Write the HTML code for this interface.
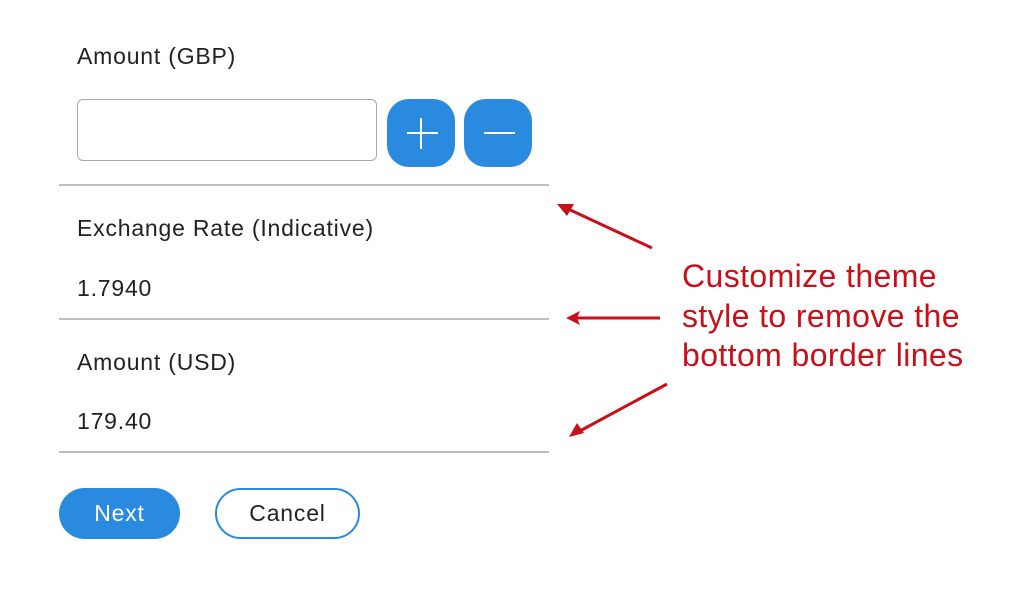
<!DOCTYPE html>
<html><head><style>
body{margin:0;width:1026px;height:594px;background:#fff;position:relative;overflow:hidden;font-family:"Liberation Sans",sans-serif;color:#222}
.a{position:absolute}
.t{font-size:23px;line-height:26px;letter-spacing:0.8px}
.line{position:absolute;left:59px;width:490px;height:2px;background:#bcbcbc}
.r{color:#c8101a;font-size:32px;line-height:40px;left:682px;letter-spacing:0.4px}
</style></head><body>
<div class="a t" style="left:77px;top:43px">Amount (GBP)</div>
<div class="a" style="left:77px;top:99px;width:298px;height:60px;border:1.5px solid #aaa;border-radius:6px"></div>
<div class="a" style="left:387px;top:99px;width:68px;height:68px;border-radius:22px;background:#2a8ae0"></div>
<div class="a" style="left:464px;top:99px;width:68px;height:68px;border-radius:22px;background:#2a8ae0"></div>
<svg class="a" style="left:0;top:0" width="1026" height="594">
<path d="M407 133H438M421 118V149M484 133H515" stroke="#fff" stroke-width="2" fill="none"/>
<g stroke="#c8101a" stroke-width="3" fill="#c8101a">
<line x1="652" y1="248" x2="566" y2="208"/>
<polygon points="557,204 574,204 567,216" stroke="none"/>
<line x1="660" y1="318" x2="575" y2="318"/>
<polygon points="566,318 580,311 577,318 580,325" stroke="none"/>
<line x1="667" y1="384" x2="578" y2="432"/>
<polygon points="569,437 577,423 584,433" stroke="none"/>
</g>
</svg>
<div class="line" style="top:184px"></div>
<div class="a t" style="left:77px;top:215px">Exchange Rate (Indicative)</div>
<div class="a t" style="left:77px;top:275px">1.7940</div>
<div class="line" style="top:318px"></div>
<div class="a t" style="left:77px;top:349px">Amount (USD)</div>
<div class="a t" style="left:77px;top:408px">179.40</div>
<div class="line" style="top:451px"></div>
<div class="a t" style="left:59px;top:488px;width:121px;height:51px;border-radius:26px;background:#2a8ae0;color:#fff;text-align:center;line-height:51px">Next</div>
<div class="a t" style="left:215px;top:488px;width:141px;height:47px;border-radius:26px;border:2px solid #2a8ae0;text-align:center;line-height:47px">Cancel</div>
<div class="a r" style="top:256px">Customize theme</div>
<div class="a r" style="top:296px">style to remove the</div>
<div class="a r" style="top:335px">bottom border lines</div>
</body></html>
